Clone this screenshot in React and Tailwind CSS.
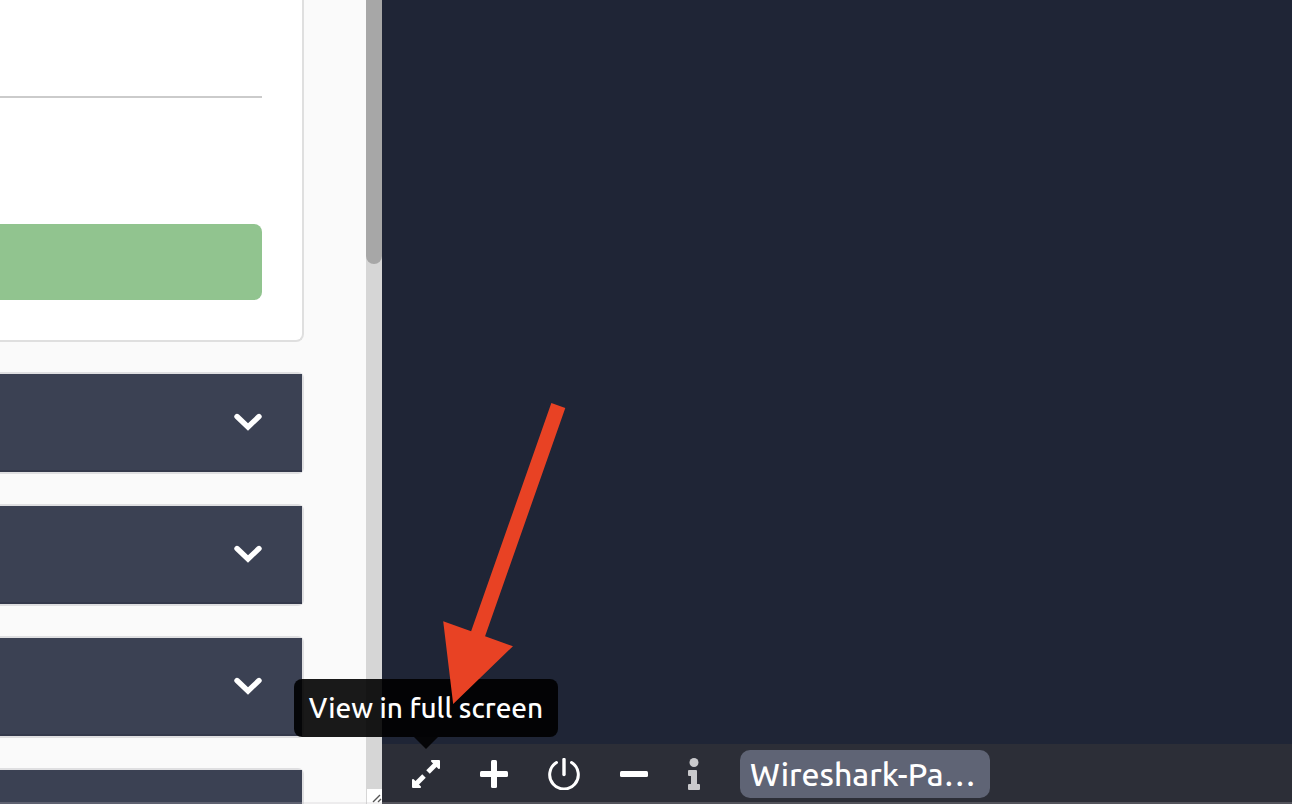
import React from "react";

const Chevron = () => (
  <svg viewBox="0 0 28 18" className="h-[18px] w-7" fill="none" aria-hidden="true">
    <path d="M3 3.5 L14 14 L25 3.5" stroke="#fff" strokeWidth="5.4" strokeLinecap="round" strokeLinejoin="miter" />
  </svg>
);

const Section = ({ label }) => (
  <div className="-mt-px h-[102px] shrink-0 rounded-r-md border-2 border-l-0 border-[#dfdfe1]">
    <button
      type="button"
      aria-label={label}
      className="flex h-full w-full items-center justify-end border-b-2 border-[#34394b] bg-[#3b4153] pr-10"
    >
      <Chevron />
    </button>
  </div>
);

const Tool = ({ label, className, children }) => (
  <button type="button" aria-label={label} className={"flex h-12 items-center justify-center " + className}>
    {children}
  </button>
);

export default function App() {
  return (
    <div className="relative flex h-screen overflow-hidden bg-[#fafafa] font-['Ubuntu','Noto_Sans',sans-serif]">
      <aside className="flex w-[366px] shrink-0 flex-col gap-[31px] overflow-hidden pr-[62px]">
        <div className="h-[342px] shrink-0 rounded-br-lg border-r-2 border-b-2 border-[#dfdfdf] bg-white pt-24 pr-10">
          <hr className="border-t-2 border-[#cbcbcb]" />
          <button type="button" aria-label="Submit" className="mt-[126px] block h-[76px] w-full rounded-r-lg bg-[#91c48f]" />
        </div>
        <Section label="Expand first task" />
        <Section label="Expand second task" />
        <Section label="Expand third task" />
        <Section label="Expand fourth task" />
      </aside>

      <div className="flex w-4 shrink-0 flex-col justify-between bg-[#d6d6d6]">
        <div className="h-[264px] rounded-b-full bg-[#a7a7a7]" />
        <svg viewBox="0 0 16 15" className="h-[15px] w-4" aria-hidden="true">
          <rect x="1" width="15" height="15" fill="#fff" />
          <path d="M7 13 L14 6 M12 13 L15 10" stroke="#555" strokeWidth="1.4" />
        </svg>
      </div>

      <main className="flex min-w-0 grow flex-col bg-[#1f2536]">
        <div className="grow" />
        <footer className="flex h-[60px] shrink-0 items-center bg-[#2c2e37] pl-6 font-medium">
          <div className="relative mr-[34px]">
            <Tool label="View in full screen" className="w-10">
              <svg viewBox="0 0 28 28" className="h-7 w-7" fill="#fff" stroke="#fff" strokeLinejoin="round" aria-hidden="true">
                <path d="M20 1 H27 V8 Z" strokeWidth="2" />
                <path d="M16 12 L24 4" strokeWidth="5" />
                <path d="M8 27 H1 V20 Z" strokeWidth="2" />
                <path d="M12 16 L4 24" strokeWidth="5" />
              </svg>
            </Tool>
            <div role="tooltip" className="absolute bottom-[61px] left-1/2 w-[264px] -translate-x-1/2 rounded-lg bg-black/90 py-[11px] text-center text-[28px] leading-9 whitespace-nowrap text-white">
              View in full screen
              <svg viewBox="0 0 24 12" className="absolute top-full left-1/2 h-3 w-6 -translate-x-1/2" aria-hidden="true">
                <path d="M0 0 H24 L12 12 Z" fill="#050507" />
              </svg>
            </div>
          </div>
          <Tool label="Add time" className="mr-10 w-7">
            <svg viewBox="0 0 28 28" className="h-7 w-7" fill="#fff" aria-hidden="true">
              <rect x="11" width="6" height="28" rx="1.500" />
              <rect y="11" width="28" height="6" rx="1.500" />
            </svg>
          </Tool>
          <Tool label="Power" className="mr-10 w-8">
            <svg viewBox="0 0 32 32" className="h-8 w-8" fill="none" stroke="#fff" strokeLinecap="round" aria-hidden="true">
              <path d="M8.500 4.500 A14.300 14.300 0 1 0 23.500 4.500" strokeWidth="3" />
              <path d="M16 1.500 V16.500" strokeWidth="3.400" />
            </svg>
          </Tool>
          <Tool label="Minimise" className="mr-10 w-7">
            <svg viewBox="0 0 28 6" className="h-[6px] w-7" aria-hidden="true">
              <rect width="28" height="6" rx="1.500" fill="#fff" />
            </svg>
          </Tool>
          <Tool label="Information" className="mr-10 w-3">
            <svg viewBox="0 0 12 32" className="h-8 w-3 overflow-visible" fill="#c9c9cc" aria-hidden="true">
              <circle cx="6" cy="4.500" r="4.500" />
              <path d="M1 12 H8 Q9 12 9 13 V26 H11 Q12 26 12 27 V31 Q12 32 11 32 H1 Q0 32 0 31 V27 Q0 26 1 26 H3 V18 H1 Q0 18 0 17 V13 Q0 12 1 12 Z" />
            </svg>
          </Tool>
          <button type="button" className="h-12 w-[250px] rounded-[10px] bg-[#5f6475] px-[10px] text-left text-[32px] leading-[48px] whitespace-nowrap text-white">
            Wireshark-Pa…
          </button>
        </footer>
      </main>

      <div className="pointer-events-none absolute inset-x-0 bottom-0 h-[2px] bg-[#c8c4c8]/25" />
      <svg viewBox="0 0 124 304" className="pointer-events-none absolute bottom-[99px] left-[443px] h-[303px] w-[124px]" aria-hidden="true">
        <path d="M108.500 1 L122.500 6 L42 235 L70 245 L10 303 L0 220 L28 230 Z" fill="#e84224" />
      </svg>
    </div>
  );
}
